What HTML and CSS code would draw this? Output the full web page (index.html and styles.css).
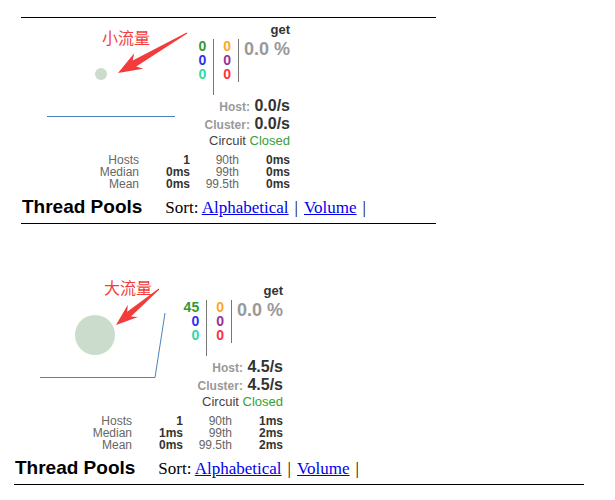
FILE: index.html
```html
<!DOCTYPE html>
<html>
<head>
<meta charset="utf-8">
<title>Hystrix</title>
<link rel="stylesheet" href="styles.css">
</head>
<body>
<section class="panel panel-first">
  <div class="monitor">
    <svg class="chart" width="270" height="180" viewBox="0 0 270 180">
      <polyline class="spark" points="26,98.5 154,98.5"/>
      <circle class="bubble" cx="80" cy="56" r="6"/>
      <polygon class="arrow" points="97,55 122.2,50.8 115.2,48.5 166.3,15.4 165.7,14.6 111.7,42.5 113.2,35.2"/>
    </svg>
    <span class="note note-small">小流量</span>
    <div class="data">
      <div class="name">get</div>
      <div class="counters">
        <div class="col col-a"><span class="success">0</span><span class="short">0</span><span class="bad">0</span></div>
        <div class="col col-b"><span class="timeout">0</span><span class="rejected">0</span><span class="failure">0</span></div>
        <div class="pct">0.0 %</div>
      </div>
      <div class="rate"><span class="rlabel">Host:</span> <span class="rval">0.0/s</span></div>
      <div class="rate"><span class="rlabel">Cluster:</span> <span class="rval">0.0/s</span></div>
      <div class="circuit">Circuit <span class="closed">Closed</span></div>
      <div class="latency">
        <span class="lab">Hosts</span><span class="val">1</span><span class="lab">90th</span><span class="val">0ms</span>
        <span class="lab">Median</span><span class="val">0ms</span><span class="lab">99th</span><span class="val">0ms</span>
        <span class="lab">Mean</span><span class="val">0ms</span><span class="lab">99.5th</span><span class="val">0ms</span>
      </div>
    </div>
  </div>
  <div class="pools-head">
    <h3 class="pools-title">Thread Pools</h3>
    <div class="sort">Sort: <a href="#">Alphabetical</a><span class="sep">|</span><a href="#">Volume</a><span class="sep">|</span></div>
  </div>
</section>

<section class="panel panel-second">
  <div class="monitor">
    <svg class="chart" width="270" height="180" viewBox="0 0 270 180">
      <polyline class="spark" points="26,98.5 141,98.5 151,34"/>
      <circle class="bubble" cx="81" cy="56" r="20"/>
      <polygon class="arrow" points="102,46 124,38 117,37.4 145.3,10.4 144.7,9.6 113.2,32.8 113.8,25.8"/>
    </svg>
    <span class="note note-big">大流量</span>
    <div class="data">
      <div class="name">get</div>
      <div class="counters">
        <div class="col col-a"><span class="success">45</span><span class="short">0</span><span class="bad">0</span></div>
        <div class="col col-b"><span class="timeout">0</span><span class="rejected">0</span><span class="failure">0</span></div>
        <div class="pct">0.0 %</div>
      </div>
      <div class="rate"><span class="rlabel">Host:</span> <span class="rval">4.5/s</span></div>
      <div class="rate"><span class="rlabel">Cluster:</span> <span class="rval">4.5/s</span></div>
      <div class="circuit">Circuit <span class="closed">Closed</span></div>
      <div class="latency">
        <span class="lab">Hosts</span><span class="val">1</span><span class="lab">90th</span><span class="val">1ms</span>
        <span class="lab">Median</span><span class="val">1ms</span><span class="lab">99th</span><span class="val">2ms</span>
        <span class="lab">Mean</span><span class="val">0ms</span><span class="lab">99.5th</span><span class="val">2ms</span>
      </div>
    </div>
  </div>
  <div class="pools-head">
    <h3 class="pools-title">Thread Pools</h3>
    <div class="sort">Sort: <a href="#">Alphabetical</a><span class="sep">|</span><a href="#">Volume</a><span class="sep">|</span></div>
  </div>
</section>
</body>
</html>
```

FILE: styles.css
```css
body {
  margin: 0;
  background: #fff;
  color: #333;
  font-family: "Liberation Sans", Arial, sans-serif;
}

.panel {
  border-top: 1px solid #000;
  border-bottom: 1px solid #000;
}

.panel-first {
  margin: 17px 0 0 21px;
  width: 415px;
}

.panel-second {
  margin: 54px 0 0 14px;
  width: 570px;
  border-top-color: transparent;
}

.monitor {
  position: relative;
  width: 269px;
}

.chart {
  position: absolute;
  left: 0;
  top: 0;
  overflow: visible;
}

.spark {
  fill: none;
  stroke: #4b82bf;
  stroke-width: 1;
}

.bubble {
  fill: #ccdccc;
}

.arrow {
  fill: #f23b3b;
}

.note {
  position: absolute;
  font-family: "Noto Sans CJK SC", "Liberation Sans", sans-serif;
  font-size: 16px;
  line-height: 16px;
  color: #f23d3d;
}

.note-small {
  left: 81px;
  top: 11px;
}

.note-big {
  left: 90px;
  top: 0;
}

.data {
  position: relative;
  display: flex;
  flex-direction: column;
  align-items: flex-end;
}

.name {
  margin-top: 4px;
  font-size: 13px;
  font-weight: bold;
  line-height: 16px;
  color: #333;
}

.counters {
  display: flex;
  margin-top: 1px;
  font-size: 14px;
  font-weight: bold;
  line-height: 14px;
}

.col {
  display: flex;
  flex-direction: column;
  align-items: flex-end;
}

.col-a {
  height: 56px;
  padding-right: 7px;
  border-right: 1px solid #777;
}

.col-b {
  height: 43px;
  padding: 0 7px 0 9px;
  border-right: 1px solid #777;
}

.success { color: #349a34; }
.short { color: #2f2ff0; }
.bad { color: #2fd8a8; }
.timeout { color: #ffa726; }
.rejected { color: #963399; }
.failure { color: #ff3040; }

.pct {
  margin-left: 5px;
  font-size: 18px;
  line-height: 20px;
  color: #999;
}

.rate {
  font-size: 16px;
  line-height: 18px;
  font-weight: bold;
}

.counters + .rate {
  margin-top: 2px;
}

.rlabel {
  font-size: 12px;
  line-height: 12px;
  color: #999;
}

.rval {
  color: #333;
}

.circuit {
  margin-top: 1px;
  font-size: 13px;
  line-height: 14px;
  color: #444;
}

.closed {
  color: #35a035;
}

.latency {
  margin-top: 6px;
  display: grid;
  grid-template-columns: auto 51px 49px 51px;
  font-size: 12px;
  line-height: 12px;
  text-align: right;
}

.lab {
  color: #666;
}

.val {
  font-weight: bold;
  color: #333;
}

.pools-head {
  display: flex;
  align-items: baseline;
  margin-top: 6px;
  padding: 0 0 5px 1px;
}

.pools-title {
  margin: 0;
  font-size: 19px;
  line-height: 22px;
  font-weight: bold;
  color: #000;
}

.sort {
  margin-left: 23px;
  font-family: "Liberation Serif", "Times New Roman", serif;
  font-size: 17px;
  color: #000;
}

.sort a {
  color: #0000ee;
}

.sep {
  margin: 0 6px;
}
```
